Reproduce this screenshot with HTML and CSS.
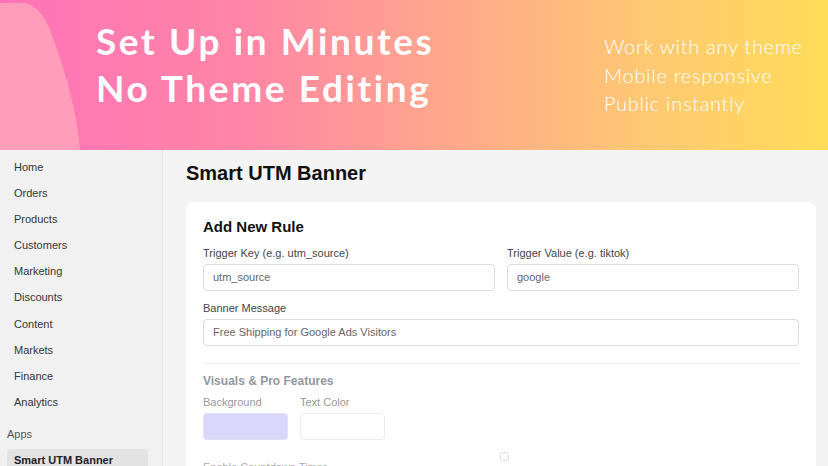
FILE: index.html
```html
<!DOCTYPE html>
<html lang="en">
<head>
  <meta charset="UTF-8" />
  <meta name="viewport" content="width=device-width, initial-scale=1.0"/>
  <title>Smart UTM Banner</title>
  <link rel="stylesheet" href="styles.css">
</head>
<body>

  <!-- Promo header -->
  <div class="hero">
    <svg class="hero-blob" width="90" height="150" viewBox="0 0 90 150">
      <path d="M0 3 L24 3 Q40 5 50 30 Q62 60 72 100 Q78 125 80 150 L0 150 Z" fill="#ff9dba"/>
    </svg>
    <div class="hero-title">
      <div>Set Up in Minutes</div>
      <div>No Theme Editing</div>
    </div>
    <ul class="hero-points">
      <li>Work with any theme</li>
      <li>Mobile responsive</li>
      <li>Public instantly</li>
    </ul>
  </div>

  <div class="admin">
    <!-- Sidebar -->
    <div class="sidebar">
      <ul>
        <li>Home</li>
        <li>Orders</li>
        <li>Products</li>
        <li>Customers</li>
        <li>Marketing</li>
        <li>Discounts</li>
        <li>Content</li>
        <li>Markets</li>
        <li>Finance</li>
        <li>Analytics</li>
      </ul>
      <div class="sidebar-group">Apps</div>
      <div class="sidebar-app">Smart UTM Banner</div>
    </div>

    <!-- Main -->
    <div class="main">
      <h1>Smart UTM Banner</h1>
      <div class="card">
        <h2>Add New Rule</h2>
        <div class="row">
          <div class="field">
            <label>Trigger Key (e.g. utm_source)</label>
            <div class="input">utm_source</div>
          </div>
          <div class="field">
            <label>Trigger Value (e.g. tiktok)</label>
            <div class="input">google</div>
          </div>
        </div>
        <div class="field">
          <label>Banner Message</label>
          <div class="input">Free Shipping for Google Ads Visitors</div>
        </div>

        <div class="divider"></div>

        <div class="pro">
          <h3>Visuals &amp; Pro Features</h3>
          <div class="swatches">
            <div class="field">
              <label>Background</label>
              <div class="swatch swatch-bg"></div>
            </div>
            <div class="field">
              <label>Text Color</label>
              <div class="swatch"></div>
            </div>
          </div>
          <div class="toggle-row">
            <span class="toggle-label">Enable Countdown Timer</span>
            <span class="checkbox"></span>
          </div>
        </div>
      </div>
    </div>
  </div>

</body>
</html>
```

FILE: styles.css
```css
/* Base */
body {
  margin: 0;
  padding: 0;
  background: #f4f4f4;
  font-family: "Liberation Sans", Arial, sans-serif;
  color: #303030;
  height: 466px;
  overflow: hidden;
}

/* Hero */
.hero {
  position: relative;
  height: 150px;
  background: linear-gradient(90deg, #ff72b8 0%, #ff86a6 30%, #ffa98a 55%, #ffc873 78%, #ffdc58 100%);
  display: flex;
  color: #fff;
}
.hero-blob {
  position: absolute;
  left: 0;
  top: 0;
}
.hero-title {
  position: relative;
  padding: 17px 0 0 96px;
  font-family: Lato, "Open Sans", sans-serif;
  font-weight: 700;
  font-size: 37px;
  line-height: 47px;
  letter-spacing: 2.6px;
  width: 470px;
}
.hero-points {
  list-style: none;
  margin: 0;
  padding: 32px 0 0 38px;
  font-family: Lato, "Open Sans", sans-serif;
  font-weight: 300;
  font-size: 20px;
  line-height: 28.5px;
  letter-spacing: 0.7px;
}

/* Admin layout */
.admin {
  display: flex;
  height: 316px;
}

/* Sidebar */
.sidebar {
  width: 162px;
  background: #f1f1f1;
  border-right: 1px solid #e6e6e6;
  flex-shrink: 0;
  padding-top: 4px;
}
.sidebar ul {
  list-style: none;
  margin: 0;
  padding: 0;
}
.sidebar li {
  padding-left: 14px;
  height: 26.1px;
  line-height: 26.1px;
  font-size: 11px;
  color: #353535;
}
.sidebar-group {
  padding: 13px 0 0 7px;
  font-size: 11px;
  color: #555;
  height: 15px;
}
.sidebar-app {
  margin: 6px 14px 0 7px;
  padding: 5px 7px;
  background: #e3e3e3;
  border-radius: 4px;
  font-size: 11px;
  font-weight: bold;
  color: #222;
}

/* Main */
.main {
  flex: 1;
  padding: 0 12px 0 23px;
}
.main h1 {
  margin: 11px 0 17px;
  font-size: 20px;
  line-height: 24px;
  color: #111;
}
.card {
  background: #fff;
  border-radius: 8px;
  padding: 16px 17px;
}
.card h2 {
  margin: 0 0 10px;
  font-size: 15px;
  line-height: 18px;
  color: #111;
}
.row {
  display: flex;
  gap: 12px;
}
.row .field {
  flex: 1;
}
.field label {
  display: block;
  font-size: 11px;
  line-height: 14px;
  color: #444;
  margin-bottom: 4px;
}
.input {
  height: 25px;
  line-height: 25px;
  border: 1px solid #dcdcdc;
  border-radius: 4px;
  padding: 0 9px;
  font-size: 11px;
  color: #666;
  margin-bottom: 10px;
}
.divider {
  border-top: 1px solid #eee;
  margin: 17px 0 10px;
}

/* Locked pro section */
.pro {
  opacity: 0.55;
}
.pro h3 {
  margin: 0 0 6px;
  font-size: 12px;
  line-height: 15px;
  color: #374151;
}
.swatches {
  display: flex;
  gap: 12px;
}
.swatch {
  width: 83px;
  height: 25px;
  border: 1px solid #ddd;
  border-radius: 4px;
}
.swatch-bg {
  background: #bdb9f7;
  border-color: #c9c6f5;
}
.toggle-row {
  display: flex;
  align-items: flex-start;
  margin-top: 12px;
}
.toggle-label {
  font-size: 11px;
  color: #666;
  padding-top: 9px;
  width: 297px;
}
.checkbox {
  width: 7px;
  height: 7px;
  border: 1px solid #ccc;
  border-radius: 2px;
}
```
